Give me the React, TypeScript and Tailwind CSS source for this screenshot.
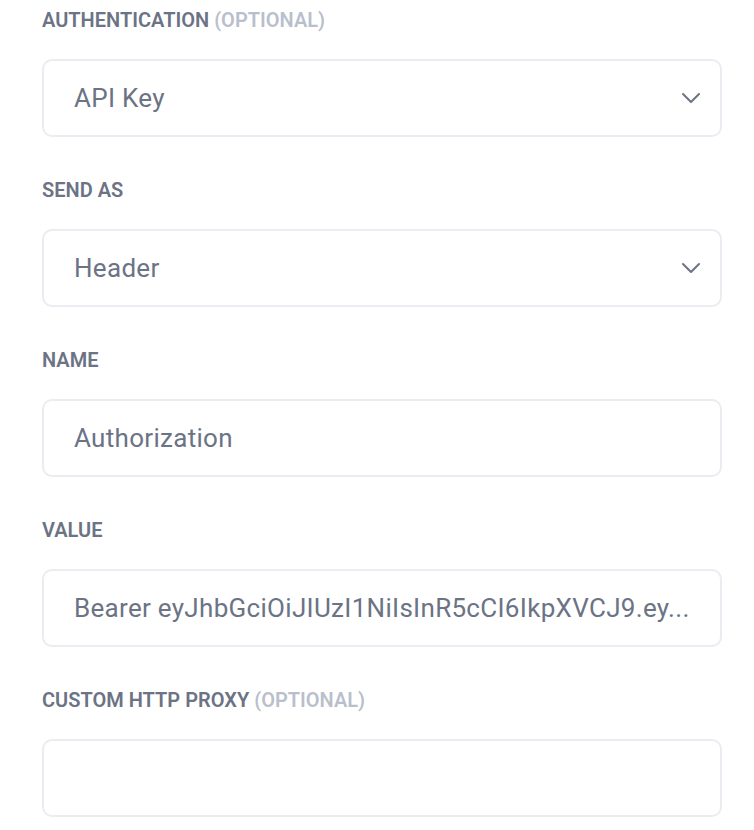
type Field = {
  label: string
  optional?: boolean
  value: string
  select?: boolean
}

const fields: Field[] = [
  { label: 'Authentication', optional: true, value: 'API Key', select: true },
  { label: 'Send as', value: 'Header', select: true },
  { label: 'Name', value: 'Authorization' },
  { label: 'Value', value: 'Bearer eyJhbGciOiJIUzI1NiIsInR5cCI6IkpXVCJ9.ey...' },
  { label: 'Custom HTTP Proxy', optional: true, value: '' },
]

function Chevron() {
  return (
    <svg width="20" height="12" viewBox="0 0 20 12" fill="none" className="ml-3 shrink-0">
      <polyline points="2,2 10,10 18,2" stroke="#6b7385" strokeWidth="2" strokeLinecap="round" strokeLinejoin="round" />
    </svg>
  )
}

export default function App() {
  return (
    <div className="min-h-[830px] bg-white pl-[42px] pr-[32px] pt-[6px] font-['Roboto',sans-serif]">
      <div className="flex flex-col gap-[39px]">
        {fields.map((f) => (
          <div key={f.label} className="flex flex-col gap-[25px]">
            <div className="text-[20px] leading-[28px] font-semibold uppercase text-[#6b7385]">
              {f.label}
              {f.optional && <span className="text-[#b9bfcc]"> (Optional)</span>}
            </div>
            <div className="flex h-[78px] items-center rounded-[10px] border-2 border-[#ebecf2] pl-[30px] pr-[19px]">
              <span className="flex-1 truncate whitespace-nowrap text-[26px] tracking-[0.3px] text-[#6b7385]">
                {f.value}
              </span>
              {f.select && <Chevron />}
            </div>
          </div>
        ))}
      </div>
    </div>
  )
}
